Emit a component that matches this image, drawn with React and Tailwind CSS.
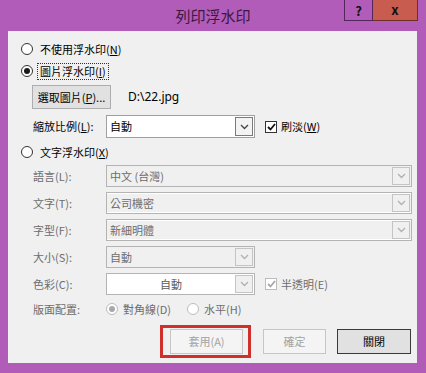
import React from "react";

function Radio({ checked, disabled }) {
  return (
    <span
      className={
        disabled
          ? "w-[12px] h-[12px] rounded-full border border-[#bcbcbc] bg-white flex items-center justify-center shrink-0"
          : "w-[12px] h-[12px] rounded-full border border-[#333333] bg-white flex items-center justify-center shrink-0"
      }
    >
      {checked && (
        <span
          className={
            disabled
              ? "w-[6px] h-[6px] rounded-full bg-[#a8a8a8]"
              : "w-[6px] h-[6px] rounded-full bg-[#1a1a1a]"
          }
        />
      )}
    </span>
  );
}

function Check({ disabled }) {
  return (
    <span
      className={
        disabled
          ? "w-[12px] h-[12px] border border-[#bcbcbc] bg-white flex items-center justify-center shrink-0"
          : "w-[12px] h-[12px] border border-[#333333] bg-white flex items-center justify-center shrink-0"
      }
    >
      <svg width="9" height="8" viewBox="0 0 9 8">
        <polyline
          points="1,4 3.5,6.5 8,1"
          fill="none"
          stroke={disabled ? "#a8a8a8" : "#111"}
          strokeWidth="1.8"
        />
      </svg>
    </span>
  );
}

function Chevron({ color }) {
  return (
    <svg width="9" height="6" viewBox="0 0 9 6">
      <polyline points="1,1 4.5,4.5 8,1" fill="none" stroke={color} strokeWidth="1.3" />
    </svg>
  );
}

function Arrow({ enabled }) {
  return (
    <div
      className={
        enabled
          ? "w-[18px] self-stretch my-[1px] mr-[1px] border border-[#7a7a7a] bg-[#f3f3f3] flex items-center justify-center"
          : "w-[18px] self-stretch my-[1px] mr-[1px] border border-[#c4c4c4] bg-[#f0f0f0] flex items-center justify-center"
      }
    >
      <Chevron color={enabled ? "#444" : "#b0b0b0"} />
    </div>
  );
}

export default function App() {
  const labelCls = "w-[74px] pl-[1px] text-[#6d6d6d] shrink-0";
  return (
    <div className="w-[426px] h-[373px] bg-[#b15cb9] flex flex-col font-['Noto_Sans_CJK_TC','Noto_Sans',sans-serif] overflow-hidden">
      {/* title bar */}
      <div className="h-[31px] shrink-0 grid grid-cols-[1fr_auto_1fr]">
        <div />
        <div className="text-[15px] leading-none pt-[8px] text-[#3b1842]">列印浮水印</div>
        <div className="flex justify-end items-start pr-[8px]">
          <div className="w-[29px] h-[21px] border border-t-0 border-[#54275c] flex items-center justify-center text-[13px] font-bold text-[#111] leading-none">
            ?
          </div>
          <div className="w-[45px] h-[21px] bg-[#c85d4f] border border-t-0 border-l-0 border-[#6e2f2b] flex items-center justify-center text-[13px] font-bold text-[#111] leading-none pb-[2px]">
            x
          </div>
        </div>
      </div>

      {/* client */}
      <div className="ml-[8px] w-[409px] h-[332px] bg-[#f0f0f0] text-[11px] leading-none text-black flex flex-col pl-[13px] pr-[5px]">
        {/* radio none */}
        <div className="mt-[8px] h-[20px] flex items-center gap-[7px]">
          <Radio />
          <span>
            不使用浮水印(<u className="underline-offset-1">N</u>)
          </span>
        </div>
        {/* picture watermark */}
        <div className="mt-[2px] h-[20px] flex items-center gap-[4px]">
          <Radio checked />
          <span className="border border-dotted border-[#333] px-[2px] py-[2px]">
            圖片浮水印(<u className="underline-offset-1">I</u>)
          </span>
        </div>
        {/* select picture */}
        <div className="mt-[4px] h-[24px] flex items-center ml-[11px]">
          <div className="w-[79px] h-[24px] bg-[#e1e1e1] border border-[#adadad] flex items-center justify-center whitespace-nowrap">
            選取圖片(<u className="underline-offset-1">P</u>)...
          </div>
          <span className="ml-[17px] text-[12px] font-['Noto_Sans',sans-serif]">D:\22.jpg</span>
        </div>
        {/* scale */}
        <div className="mt-[6px] h-[23px] flex items-center ml-[11px]">
          <span className="w-[74px] pl-[1px] shrink-0">
            縮放比例(<u className="underline-offset-1">L</u>):
          </span>
          <div className="w-[149px] h-[23px] bg-white border border-[#a0a0a0] flex items-center">
            <span className="flex-1 pl-[3px]">自動</span>
            <Arrow enabled />
          </div>
          <div className="ml-[10px] flex items-center gap-[4px]">
            <Check />
            <span>
              刷淡(<u className="underline-offset-1">W</u>)
            </span>
          </div>
        </div>
        {/* text watermark */}
        <div className="mt-[4px] h-[20px] flex items-center gap-[7px]">
          <Radio />
          <span>
            文字浮水印(<u className="underline-offset-1">X</u>)
          </span>
        </div>

        {/* language */}
        <div className="mt-[3px] h-[22px] flex items-center ml-[11px]">
          <span className={labelCls}>語言(L):</span>
          <div className="flex-1 h-[22px] border border-[#b4b4b4] bg-[#f0f0f0] flex items-center">
            <span className="flex-1 pl-[3px] text-[#6d6d6d]">中文 (台灣)</span>
            <Arrow />
          </div>
        </div>
        {/* text */}
        <div className="mt-[5px] h-[22px] flex items-center ml-[11px]">
          <span className={labelCls}>文字(T):</span>
          <div className="flex-1 h-[22px] border border-[#b4b4b4] bg-[#f0f0f0] shadow-[inset_0_1px_0_#ffffff,inset_0_-1px_0_#ffffff] flex items-center">
            <span className="flex-1 pl-[3px] text-[#6d6d6d]">公司機密</span>
            <Arrow />
          </div>
        </div>
        {/* font */}
        <div className="mt-[5px] h-[22px] flex items-center ml-[11px]">
          <span className={labelCls}>字型(F):</span>
          <div className="flex-1 h-[22px] border border-[#b4b4b4] bg-[#f0f0f0] shadow-[inset_0_1px_0_#ffffff,inset_0_-1px_0_#ffffff] flex items-center">
            <span className="flex-1 pl-[3px] text-[#6d6d6d]">新細明體</span>
            <Arrow />
          </div>
        </div>
        {/* size */}
        <div className="mt-[5px] h-[22px] flex items-center ml-[11px]">
          <span className={labelCls}>大小(S):</span>
          <div className="w-[149px] h-[22px] border border-[#b4b4b4] bg-[#f0f0f0] flex items-center">
            <span className="flex-1 pl-[3px] text-[#6d6d6d]">自動</span>
            <Arrow />
          </div>
        </div>
        {/* color */}
        <div className="mt-[5px] h-[22px] flex items-center ml-[11px]">
          <span className={labelCls}>色彩(C):</span>
          <div className="w-[149px] h-[22px] border border-[#b4b4b4] bg-white flex items-center">
            <span className="flex-1 text-center text-[#5a5a5a]">自動</span>
            <Arrow />
          </div>
          <div className="ml-[10px] flex items-center gap-[4px] text-[#6d6d6d]">
            <Check disabled />
            <span>半透明(E)</span>
          </div>
        </div>
        {/* layout */}
        <div className="mt-[4px] h-[20px] flex items-center ml-[11px] text-[#6d6d6d]">
          <span className="w-[74px] pl-[1px] shrink-0">版面配置:</span>
          <div className="flex items-center gap-[5px]">
            <Radio checked disabled />
            <span>對角線(D)</span>
          </div>
          <div className="ml-[16px] flex items-center gap-[5px]">
            <Radio disabled />
            <span>水平(H)</span>
          </div>
        </div>

        {/* buttons */}
        <div className="mt-[6px] flex items-start">
          <div className="ml-[139px] shrink-0 w-[91px] h-[33px] border-[3px] border-[#d0302c] flex items-center pl-[7px]">
            <div className="w-[73px] h-[25px] border border-[#c6c6c6] bg-[#f4f4f4] flex items-center justify-center text-[#a3a3a3]">
              套用(A)
            </div>
          </div>
          <div className="ml-[12px] shrink-0 mt-[4px] w-[63px] h-[25px] border border-[#c6c6c6] bg-[#f4f4f4] flex items-center justify-center text-[#a3a3a3]">
            確定
          </div>
          <div className="ml-[11px] shrink-0 mt-[4px] w-[74px] h-[25px] border border-[#3a3a3a] bg-[#e1e1e1] flex items-center justify-center text-black">
            關閉
          </div>
        </div>
      </div>
    </div>
  );
}
